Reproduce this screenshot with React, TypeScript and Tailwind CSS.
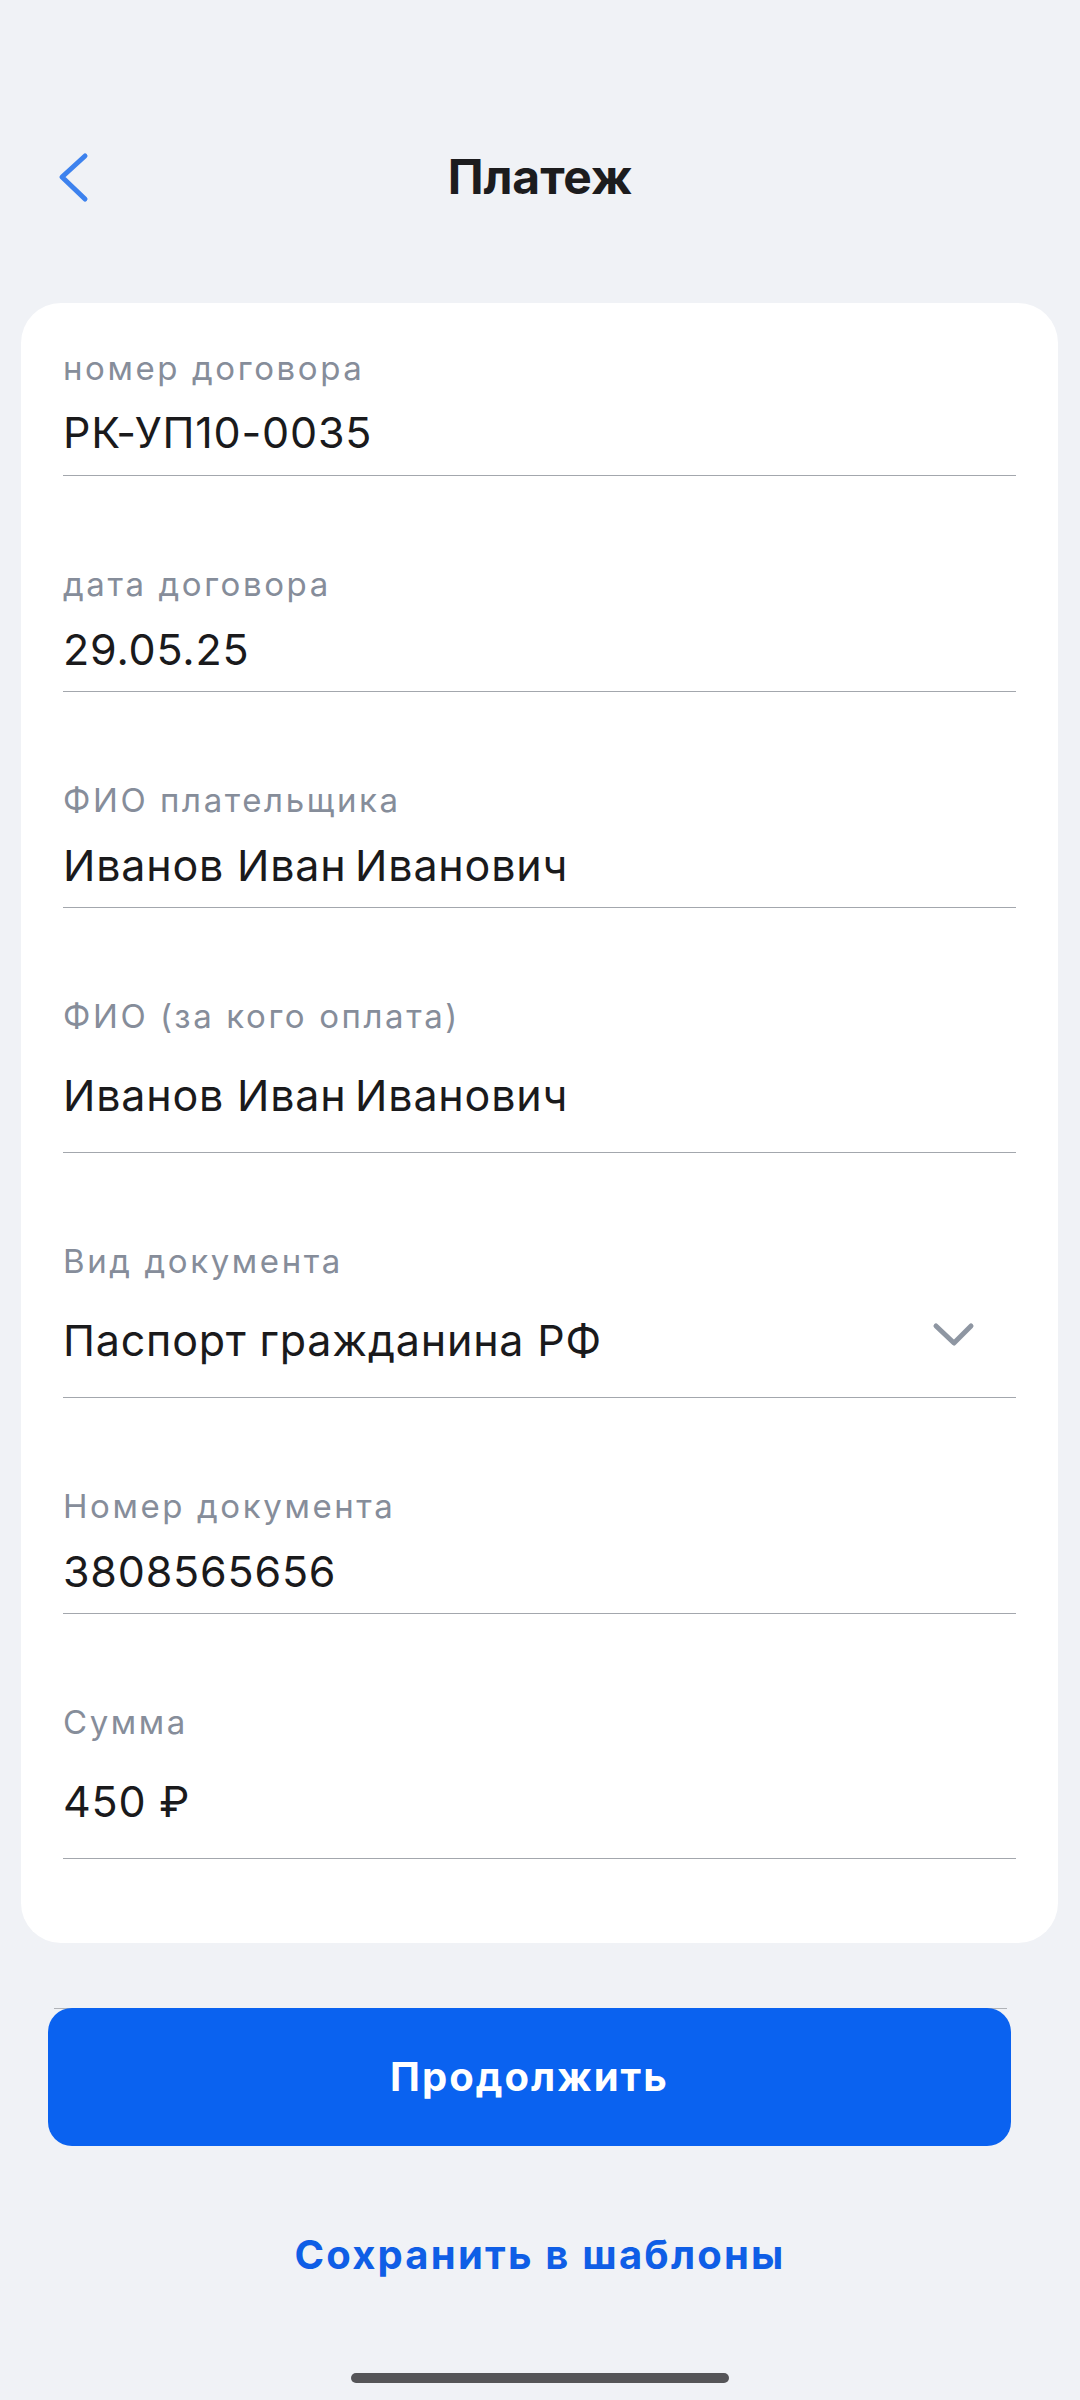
import React from "react";

const font = { fontFamily: "Inter, 'Noto Sans', sans-serif" };

type F = { label: string; value: string; kind: "first" | "std" | "tall"; select?: boolean };

const fields: F[] = [
  { label: "номер договора", value: "РК-УП10-0035", kind: "first" },
  { label: "дата договора", value: "29.05.25", kind: "std" },
  { label: "ФИО плательщика", value: "Иванов Иван\u2009Иванович", kind: "std" },
  { label: "ФИО (за кого оплата)", value: "Иванов Иван\u2009Иванович", kind: "tall" },
  { label: "Вид документа", value: "Паспорт гражданина РФ", kind: "tall", select: true },
  { label: "Номер документа", value: "3808565656", kind: "std" },
  { label: "Сумма", value: "450 ₽", kind: "tall" },
];

function Field({ f }: { f: F }) {
  const wrap =
    f.kind === "first"
      ? "h-[173px] pt-[45px]"
      : f.kind === "std"
      ? "h-[216px] pt-[88px]"
      : "h-[245px] pt-[88px]";
  const valueMt = f.kind === "first" ? "mt-[20px]" : f.kind === "std" ? "mt-[21px]" : "mt-[35px]";
  return (
    <div className={`${wrap} border-b border-[#a3a7ad]`}>
      <div className="text-[33px] leading-[40px] text-[#868d9a] tracking-[2.6px]">{f.label}</div>
      <div className={`${valueMt} flex items-center justify-between`}>
        <div className="text-[43px] leading-[48px] text-[#1a1a1c] tracking-[0.8px]">{f.value}</div>
        {f.select && (
          <svg width="48" height="48" viewBox="0 0 48 48" className="mr-[40px]">
            <polyline
              points="8,10 26,27 43,10"
              fill="none"
              stroke="#8e96a2"
              strokeWidth="5"
              strokeLinecap="round"
              strokeLinejoin="round"
            />
          </svg>
        )}
      </div>
    </div>
  );
}

export default function App() {
  return (
    <div className="w-[1080px] h-[2400px] bg-[#f0f2f6] flex flex-col" style={font}>
      <div className="pt-[149px] grid grid-cols-[1fr_auto_1fr] items-center h-[205px]">
        <div className="flex items-center">
          <svg width="40" height="56" viewBox="0 0 40 56" className="ml-[55px]">
            <polyline
              points="30,7 7,28 30,50"
              fill="none"
              stroke="#3d82ee"
              strokeWidth="5"
              strokeLinecap="round"
              strokeLinejoin="round"
            />
          </svg>
        </div>
        <div className="text-[48px] leading-[56px] font-bold text-[#1c1c1e] tracking-[-0.1px]">Платеж</div>
        <div />
      </div>

      <div className="mt-[98px] ml-[21px] w-[1037px] bg-white rounded-[40px] px-[42px] pb-[84px]">
        {fields.map((f, i) => (
          <Field key={i} f={f} />
        ))}
      </div>

      <div className="mt-[65px] ml-[54px] w-[953px] h-px bg-[#b0b3b8]" />
      <button className="-mt-px ml-[48px] w-[963px] h-[138px] rounded-[24px] bg-[#0a62f0] text-white text-[40px] leading-[48px] font-bold tracking-[2px]">
        Продолжить
      </button>

      <div className="mt-[85px] text-center text-[40px] leading-[48px] font-bold text-[#0f5ee6] tracking-[2.2px]">
        Сохранить в шаблоны
      </div>

      <div className="mt-auto mb-[17px] mx-auto w-[378px] h-[10px] rounded-full bg-[#555558]" />
    </div>
  );
}
